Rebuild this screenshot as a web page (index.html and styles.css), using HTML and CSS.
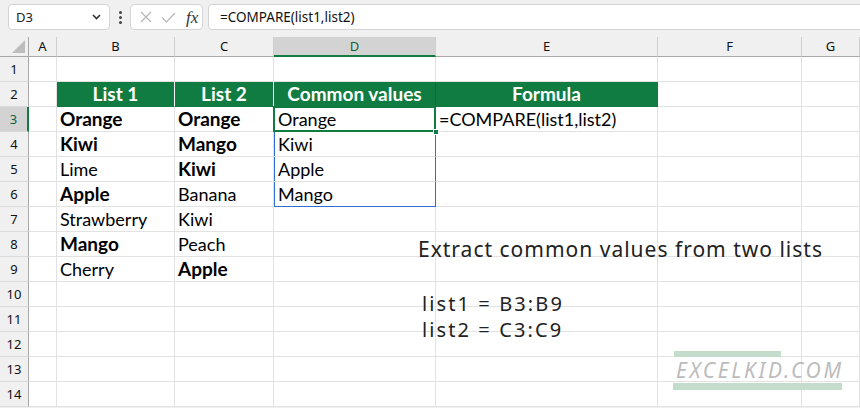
FILE: index.html
```html
<!DOCTYPE html>
<html>
<head>
<meta charset="utf-8">
<link rel="stylesheet" href="styles.css">
</head>
<body>
<div class="app">
  <header class="fbar">
    <div class="namebox"><span>D3</span>
      <svg class="chev" width="9" height="6" viewBox="0 0 9 6"><path d="M1 1 L4.5 4.5 L8 1" fill="none" stroke="#333" stroke-width="1.6"/></svg>
    </div>
    <div class="vdots"><i></i><i></i><i></i></div>
    <div class="fbtns">
      <svg class="ico" width="12" height="12" viewBox="0 0 12 12"><path d="M1 1 L11 11 M11 1 L1 11" stroke="#b4b4b4" stroke-width="1.1" fill="none"/></svg>
      <svg class="ico chk" width="15" height="11" viewBox="0 0 15 11"><path d="M1 5.5 L5.5 10 L14 1" stroke="#b4b4b4" stroke-width="1.1" fill="none"/></svg>
      <span class="fx">fx</span>
    </div>
    <div class="finput">=COMPARE(list1,list2)</div>
  </header>

  <div class="sheet">
    <div class="corner"><span class="tri"></span></div>
    <div class="ch">A</div><div class="ch">B</div><div class="ch">C</div><div class="ch ch-sel">D</div><div class="ch">E</div><div class="ch">F</div><div class="ch">G</div>

    <div class="rh">1</div><div class="c"></div><div class="c"></div><div class="c"></div><div class="c"></div><div class="c"></div><div class="c"></div><div class="c"></div>

    <div class="rh">2</div><div class="c"></div><div class="c hd">List 1</div><div class="c hd">List 2</div><div class="c hd hd-d">Common values</div><div class="c hd hd-last">Formula</div><div class="c"></div><div class="c"></div>

    <div class="rh rh-sel">3</div><div class="c"></div><div class="c b">Orange</div><div class="c b">Orange</div><div class="c spill sel">Orange<span class="handle"></span></div><div class="c">=COMPARE(list1,list2)</div><div class="c"></div><div class="c"></div>

    <div class="rh">4</div><div class="c"></div><div class="c b">Kiwi</div><div class="c b">Mango</div><div class="c spill">Kiwi</div><div class="c"></div><div class="c"></div><div class="c"></div>

    <div class="rh">5</div><div class="c"></div><div class="c">Lime</div><div class="c b">Kiwi</div><div class="c spill">Apple</div><div class="c"></div><div class="c"></div><div class="c"></div>

    <div class="rh">6</div><div class="c"></div><div class="c b">Apple</div><div class="c">Banana</div><div class="c spill spill-end">Mango</div><div class="c"></div><div class="c"></div><div class="c"></div>

    <div class="rh">7</div><div class="c"></div><div class="c">Strawberry</div><div class="c">Kiwi</div><div class="c"></div><div class="c"></div><div class="c"></div><div class="c"></div>

    <div class="rh">8</div><div class="c"></div><div class="c b">Mango</div><div class="c">Peach</div><div class="c"></div><div class="c"></div><div class="c"></div><div class="c"></div>

    <div class="rh">9</div><div class="c"></div><div class="c">Cherry</div><div class="c b">Apple</div><div class="c"></div><div class="c"></div><div class="c"></div><div class="c"></div>

    <div class="rh">10</div><div class="c"></div><div class="c"></div><div class="c"></div><div class="c"></div><div class="c"></div><div class="c"></div><div class="c"></div>
    <div class="rh">11</div><div class="c"></div><div class="c"></div><div class="c"></div><div class="c"></div><div class="c"></div><div class="c"></div><div class="c"></div>
    <div class="rh">12</div><div class="c"></div><div class="c"></div><div class="c"></div><div class="c"></div><div class="c"></div><div class="c"></div><div class="c"></div>
    <div class="rh">13</div><div class="c"></div><div class="c"></div><div class="c"></div><div class="c"></div><div class="c"></div><div class="c"></div><div class="c"></div>
    <div class="rh">14</div><div class="c"></div><div class="c"></div><div class="c"></div><div class="c"></div><div class="c"></div><div class="c"></div><div class="c"></div>
  </div>

  <div class="note">
    <p class="note-title">Extract common values from two lists</p>
    <p class="note-line first">list1 = B3:B9</p>
    <p class="note-line">list2 = C3:C9</p>
  </div>

  <div class="logo">
    <span class="bar bar-top"></span>
    <span class="logo-text">EXCELKID.COM</span>
    <span class="bar bar-bottom"></span>
  </div>
</div>
</body>
</html>
```

FILE: styles.css
```css
* { box-sizing: border-box; margin: 0; padding: 0; }
body { margin: 0; width: 860px; height: 408px; overflow: hidden; background: #fff; }
.app { position: relative; width: 860px; height: 408px; overflow: hidden; background: #f0f0f0; font-family: "Lato", "Liberation Sans", sans-serif; }

/* formula bar */
.fbar { height: 37px; display: flex; align-items: flex-start; padding: 4px 0 0 8px; }
.namebox { width: 102px; height: 26px; background: #fff; border: 1px solid #d4d4d4; border-radius: 4px; display: flex; align-items: center; justify-content: space-between; padding: 0 8px 0 7px; font: 13px "Noto Sans", sans-serif; color: #222; }
.vdots { width: 20px; height: 26px; display: flex; flex-direction: column; align-items: center; justify-content: center; gap: 2px; }
.vdots i { display: block; width: 3px; height: 3px; border-radius: 50%; background: #444; }
.fbtns { width: 73px; height: 26px; background: #fff; border: 1px solid #d4d4d4; border-radius: 4px; display: flex; align-items: center; padding-left: 9px; }
.chk { margin-left: 9px; }
.fx { margin-left: 10px; font: italic 17px "Liberation Serif", serif; color: #333; line-height: 1; }
.finput { flex: 1; margin-left: 5px; margin-right: -10px; height: 26px; background: #fff; border: 1px solid #d4d4d4; border-radius: 4px; padding-left: 11px; font: 13.5px "Noto Sans", sans-serif; line-height: 24px; color: #111; }

/* sheet grid */
.sheet { display: grid; grid-template-columns: 29px 28px 118px 99px 162px 222px 144px 58px; grid-template-rows: 20px repeat(14, 25px); background: #fff; }
.corner { background: #f0f0f0; border-right: 1px solid #a8a8a8; border-bottom: 1px solid #a8a8a8; position: relative; }
.tri { position: absolute; right: 3px; bottom: 3px; width: 0; height: 0; border-left: 13px solid transparent; border-bottom: 13px solid #bdbdbd; }
.ch { background: #f0f0f0; border-right: 1px solid #cfcfcf; border-bottom: 1px solid #a8a8a8; text-align: center; font: 13px "Noto Sans", sans-serif; line-height: 19px; color: #111; }
.ch-sel { background: #d3d3d3; border-bottom: 2px solid #107c41; color: #155f35; line-height: 18px; }
.rh { background: #f0f0f0; border-right: 1px solid #a8a8a8; border-bottom: 1px solid #dadada; text-align: center; font: 13px "Noto Sans", sans-serif; line-height: 24px; color: #111; }
.rh-sel { background: #d3d3d3; border-right: 2px solid #107c41; color: #155f35; }

.c { border-right: 1px solid #e2e2e2; border-bottom: 1px solid #e2e2e2; padding-left: 3px; font-size: 18px; line-height: 24px; color: #000; white-space: nowrap; }
.b { font-weight: 700; font-size: 19px; }
.hd { background: #107c41; color: #fff; font-weight: 700; font-size: 19px; text-align: center; padding-left: 0; border-right-color: #fff; border-bottom-color: #107c41; }
.hd-d { border-right-color: #0d6a37; }
.hd-last { border-right-color: #107c41; }

.spill { padding-left: 4px; box-shadow: inset 1px 0 0 #2f6ed3; border-right-color: #2f6ed3; }
.spill-end { border-bottom-color: #2f6ed3; }
.sel { position: relative; }
.sel::after { content: ""; position: absolute; left: -1px; top: -1px; right: -1px; bottom: -1px; border: 2px solid #107c41; }
.handle { position: absolute; left: 159px; top: 22px; width: 6px; height: 6px; background: #107c41; border: 1px solid #fff; z-index: 2; }

/* handwritten note */
.note { position: absolute; left: 418px; top: 234px; color: #222; font-family: "Noto Sans", sans-serif; }
.note-title { font-size: 21px; line-height: 30px; letter-spacing: 1px; }
.note-line { font-size: 20px; line-height: 26px; margin-left: 4px; letter-spacing: 2.1px; }
.note-line.first { margin-top: 27px; }

/* logo */
.logo { position: absolute; left: 673px; top: 351px; display: flex; flex-direction: column; align-items: flex-start; }
.bar { display: block; background: #c3dccb; }
.bar-top { width: 107px; height: 6px; margin-left: 1px; }
.bar-bottom { width: 169px; height: 7px; }
.logo-text { font: italic 21px "Noto Sans", sans-serif; color: #bcbcbc; line-height: 26px; margin-left: 3px; letter-spacing: 2.7px; }
```
